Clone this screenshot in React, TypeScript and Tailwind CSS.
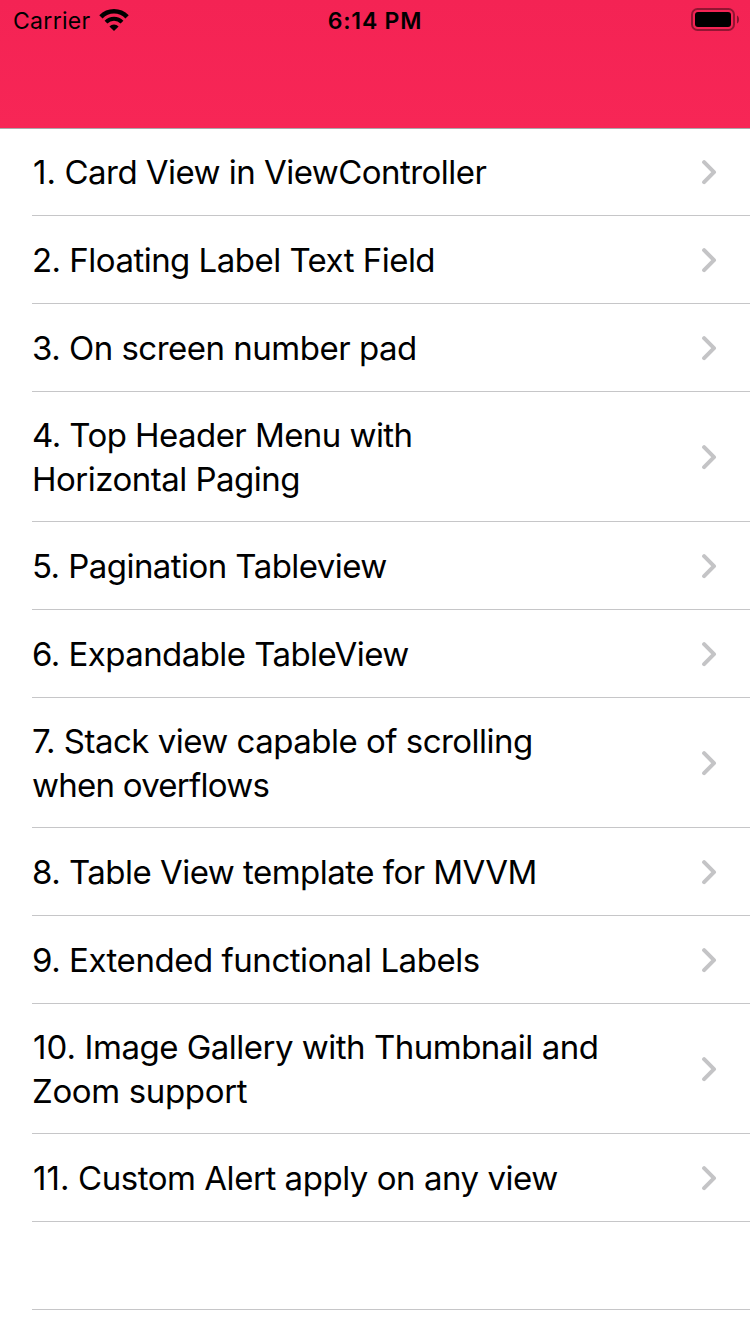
type Line = { number?: string; text: string; tracking: string };

const rows: Line[][] = [
  [{ number: '1.', text: 'Card View in ViewController', tracking: 'tracking-[-0.54px]' }],
  [{ text: '2. Floating Label Text Field', tracking: 'tracking-[-0.52px]' }],
  [{ text: '3. On screen number pad', tracking: 'tracking-[-0.5px]' }],
  [
    { text: '4. Top Header Menu with', tracking: 'tracking-[-0.56px]' },
    { text: 'Horizontal Paging', tracking: 'tracking-[-0.51px]' },
  ],
  [{ text: '5. Pagination Tableview', tracking: 'tracking-[-0.56px]' }],
  [{ text: '6. Expandable TableView', tracking: 'tracking-[-0.56px]' }],
  [
    { text: '7. Stack view capable of scrolling', tracking: 'tracking-[-0.51px]' },
    { text: 'when overflows', tracking: 'tracking-[-0.75px]' },
  ],
  [{ text: '8. Table View template for MVVM', tracking: 'tracking-[-0.52px]' }],
  [{ text: '9. Extended functional Labels', tracking: 'tracking-[-0.46px]' }],
  [
    { number: '10.', text: 'Image Gallery with Thumbnail and', tracking: 'tracking-[-0.5px]' },
    { text: 'Zoom support', tracking: 'tracking-[-0.35px]' },
  ],
  [{ number: '11.', text: 'Custom Alert apply on any view', tracking: 'tracking-[-0.46px]' }],
];

function WifiIcon() {
  return (
    <svg width="30" height="22" viewBox="0 0 30 22" fill="none" aria-hidden="true">
      <path d="M1.9 7.8a18.4 18.4 0 0 1 26.2 0" stroke="black" strokeWidth="4.6" />
      <path d="M7 13.2a11.2 11.2 0 0 1 16 0" stroke="black" strokeWidth="4" />
      <path d="M15 22l4.6-4.6a6.5 6.5 0 0 0-9.2 0z" fill="black" />
    </svg>
  );
}

function BatteryIcon() {
  return (
    <svg width="48" height="23" viewBox="0 0 48 23" fill="none" aria-hidden="true">
      <rect x="1" y="1" width="42" height="21" rx="5.5" stroke="black" strokeOpacity="0.4" strokeWidth="2" />
      <rect x="4" y="4" width="36" height="15" rx="3" fill="black" />
      <path d="M46 7.5c1.3.5 2 2.1 2 4s-.7 3.5-2 4z" fill="black" fillOpacity="0.45" />
    </svg>
  );
}

function Chevron() {
  return (
    <svg width="16" height="26" viewBox="0 0 16 26" fill="none" aria-hidden="true">
      <path d="M3.1 3.2L13 13.2L3.1 23.2" stroke="#c4c4c6" strokeWidth="4" strokeLinecap="round" strokeLinejoin="round" />
    </svg>
  );
}

export default function App() {
  return (
    <div className="flex h-[1334px] w-[750px] flex-col overflow-hidden bg-white font-['Inter',sans-serif] text-black">
      <header className="relative z-10 h-[129px] shrink-0 border-b border-[#a9a9ab] bg-linear-to-b from-[#f42354] to-[#f72656]">
        <div className="grid h-10 grid-cols-3 items-center pt-0.5 text-[23px] leading-[38px]">
          <div className="flex items-center gap-2 pl-[13px]">
            <span className="tracking-[0.3px]">Carrier</span>
            <div className="pb-0.5">
              <WifiIcon />
            </div>
          </div>
          <span className="text-center font-semibold tracking-[0.8px]">6:14 PM</span>
          <div className="flex justify-end pr-[11px] pb-[3px]">
            <BatteryIcon />
          </div>
        </div>
      </header>
      <ul className="-mt-px">
        {rows.map((lines) => (
          <li key={lines[0].text} className={lines.length > 1 ? 'flex h-[130px] pl-8' : 'flex h-[88px] pl-8'}>
            <div className="flex flex-1 items-center justify-between border-b border-[#c6c6c8] pr-[33px]">
              <div className="flex flex-col text-[33px] leading-[44px]">
                {lines.map((line) => (
                  <span key={line.text} className={`whitespace-nowrap ${line.tracking}`}>
                    {line.number && <span className="-mr-px ml-px tracking-[0.1px]">{line.number} </span>}
                    {line.text}
                  </span>
                ))}
              </div>
              <Chevron />
            </div>
          </li>
        ))}
        <li className="flex h-[88px] pl-8">
          <div className="flex-1 border-b border-[#c6c6c8]" />
        </li>
      </ul>
    </div>
  );
}
